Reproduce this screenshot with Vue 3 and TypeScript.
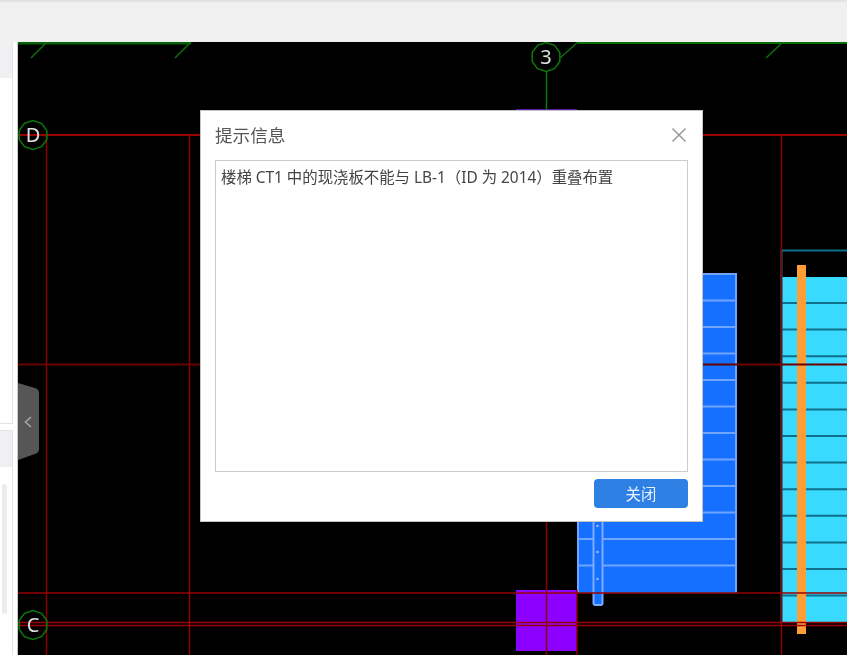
<script setup lang="ts">
const blueLines = [300.5, 327, 353.5, 380, 406.5, 433, 459.5, 486, 512.5, 539, 565.5]
const cyanLines = [303, 329.6, 356.2, 382.8, 409.4, 436, 462.6, 489.2, 515.8, 542.4, 569, 595.6]
const railDots = [526, 552, 579]
const gridV = [46.5, 189.5, 546.5, 781.5]
const gridH = [
  { y: 135, w: 2, c: '#9a0000' },
  { y: 364.5, w: 2, c: '#6a0000' },
  { y: 593, w: 1.5, c: '#9a0000' },
  { y: 622.5, w: 1.5, c: '#9a0000' },
  { y: 625.5, w: 1.5, c: '#9a0000' },
]
const ticks = [
  [31, 58, 47, 42],
  [175, 58, 191, 42],
  [560, 58, 578, 42],
  [766, 58, 783, 42],
]
const axes = [
  { label: 'D', x: 33, y: 135 },
  { label: '3', x: 546, y: 57 },
  { label: 'C', x: 33, y: 625 },
]

function ring(cx: number, cy: number) {
  const pts: string[] = []
  for (let i = 0; i < 10; i++) {
    const a = (Math.PI * 2 * i) / 10 + Math.PI / 10
    pts.push(`${(cx + 14.5 * Math.cos(a)).toFixed(1)},${(cy + 14.5 * Math.sin(a)).toFixed(1)}`)
  }
  return pts.join(' ')
}
</script>

<template>
  <div class="page">
    <div class="topbar"></div>
    <div class="main">
      <aside class="sidebar">
        <section class="panel panel-top">
          <div class="panel-head"></div>
        </section>
        <section class="panel panel-bottom">
          <div class="panel-head"></div>
          <div class="scroll"></div>
        </section>
      </aside>

      <div class="canvas">
        <svg class="drawing" viewBox="18 42 829 613" width="829" height="613">
          <!-- cyan stair -->
          <rect x="782" y="277" width="65" height="345" fill="#38dbff" />
          <line v-for="y in cyanLines" :key="y" x1="782" x2="847" :y1="y" :y2="y" stroke="#0e6f8c" stroke-width="2" />
          <path d="M781.5 622V250.5H847" fill="none" stroke="#0e6f8c" stroke-width="2" />

          <!-- blue stair -->
          <rect x="577" y="273" width="160" height="320" fill="#1570ff" />
          <line v-for="y in blueLines" :key="y" x1="577" x2="737" :y1="y" :y2="y" stroke="#6fa4ff" stroke-width="2" />
          <path d="M578 592V274H736V592" fill="none" stroke="#6fa4ff" stroke-width="2" />
          <rect x="593.5" y="480" width="9" height="125" rx="2" fill="#1570ff" stroke="#7cabff" stroke-width="2" />
          <circle v-for="y in railDots" :key="y" cx="597.5" :cy="y" r="1.3" fill="#8fb8ff" />

          <rect x="516" y="590" width="61" height="61" fill="#8c00ff" />
          <line x1="516" x2="577" y1="109.5" y2="109.5" stroke="#5b16a8" />
          <rect x="797" y="265" width="9" height="369" fill="#ff9d36" />

          <!-- grid -->
          <line v-for="x in gridV" :key="x" :x1="x" :x2="x" y1="135" y2="655" stroke="#8c0000" stroke-width="1.5" />
          <line x1="577" x2="577" y1="590" y2="655" stroke="#8c0000" stroke-width="1.5" />
          <line
            v-for="h in gridH"
            :key="h.y"
            x1="18"
            x2="847"
            :y1="h.y"
            :y2="h.y"
            :stroke="h.c"
            :stroke-width="h.w"
          />

          <!-- axes -->
          <line x1="18" x2="191" y1="43" y2="43" stroke="#0a5f0a" stroke-width="3" />
          <line x1="578" x2="847" y1="43" y2="43" stroke="#0a6f0a" stroke-width="2" />
          <line
            v-for="(t, i) in ticks"
            :key="i"
            :x1="t[0]"
            :y1="t[1]"
            :x2="t[2]"
            :y2="t[3]"
            stroke="#0b6f0b"
            stroke-width="1.5"
          />
          <line x1="546.5" x2="546.5" y1="71" y2="110" stroke="#0b7a0b" stroke-width="1.5" />
          <g v-for="a in axes" :key="a.label">
            <polygon :points="ring(a.x, a.y)" fill="none" stroke="#0b7a0b" stroke-width="1.5" />
            <text :x="a.x" :y="a.y + 7" class="axis-label" text-anchor="middle">{{ a.label }}</text>
          </g>
        </svg>

        <div class="toggle">
          <svg width="21" height="78" viewBox="0 0 21 78">
            <path d="M0 0L17 5Q21 6 21 10V66Q21 70 17 71L0 77Z" fill="#565656" />
            <path d="M13 34L7.5 39L13 44" fill="none" stroke="#a5a5a5" stroke-width="1.6" />
          </svg>
        </div>

        <div class="dialog">
          <header class="dialog-head">
            <span class="dialog-title">提示信息</span>
            <svg class="dialog-close" width="16" height="16" viewBox="0 0 16 16">
              <path d="M1.5 1.5L14.5 14.5M14.5 1.5L1.5 14.5" stroke="#999" stroke-width="1.5" fill="none" />
            </svg>
          </header>
          <div class="dialog-body">楼梯 CT1 中的现浇板不能与 LB-1（ID 为 2014）重叠布置</div>
          <footer class="dialog-foot">
            <button class="dialog-btn" type="button">关闭</button>
          </footer>
        </div>
      </div>
    </div>
  </div>
</template>

<style>
html,
body {
  margin: 0;
  background: #fff;
  overflow: hidden;
}
</style>

<style scoped>
.page {
  width: 847px;
  height: 655px;
  display: flex;
  flex-direction: column;
  font-family: "Noto Sans", "Noto Sans CJK SC", sans-serif;
  overflow: hidden;
  filter: blur(0.35px);
}

.topbar {
  height: 40px;
  flex: none;
  background: #f0f0f0;
  border-top: 2px solid #e2e2e2;
}

.main {
  flex: 1;
  display: flex;
  min-height: 0;
}

.sidebar {
  width: 18px;
  flex: none;
  box-sizing: border-box;
  display: flex;
  flex-direction: column;
  gap: 6px;
  background: #fff;
  border-right: 1px solid #c8c8c8;
}

.panel {
  width: 13px;
  box-sizing: border-box;
  background: #fff;
  border-right: 1px solid #e4e4e4;
}

.panel-top {
  height: 382px;
  border-bottom: 1px solid #e4e4e4;
}

.panel-bottom {
  flex: 1;
  border-top: 1px solid #e4e4e4;
  position: relative;
}

.panel-head {
  height: 36px;
  background: #f0f0f3;
}

.scroll {
  position: absolute;
  left: 2px;
  top: 53px;
  width: 5px;
  height: 130px;
  border-radius: 3px;
  background: #ececec;
}

.canvas {
  flex: 1;
  position: relative;
  background: #000;
  overflow: hidden;
}

.drawing {
  display: block;
}

.axis-label {
  font-family: "Noto Sans", sans-serif;
  font-size: 20px;
  fill: #e0e0e0;
}

.toggle {
  position: absolute;
  left: 0;
  top: 341px;
  line-height: 0;
}

.dialog {
  position: absolute;
  left: 183px;
  top: 69px;
  width: 501px;
  height: 410px;
  box-sizing: border-box;
  display: flex;
  flex-direction: column;
  padding: 0 14px 14px 14px;
  background: #fff;
  box-shadow: 0 0 0 1px #c4c4c4;
}

.dialog-head {
  height: 49px;
  flex: none;
  display: flex;
  align-items: center;
  justify-content: space-between;
}

.dialog-title {
  font-size: 17.6px;
  line-height: 50px;
  margin-top: -2px;
  color: #555;
}

.dialog-close {
  margin-top: -2px;
  margin-right: 1px;
}

.dialog-body {
  height: 312px;
  flex: none;
  box-sizing: border-box;
  padding: 7px 5px 5px;
  border: 1px solid #ccc;
  font-size: 15.4px;
  line-height: 20px;
  color: #444;
}

.dialog-foot {
  margin-top: 7px;
  display: flex;
  justify-content: flex-end;
}

.dialog-btn {
  width: 94px;
  height: 29px;
  padding: 0;
  border: none;
  border-radius: 4px;
  background: #2f80e4;
  color: #e8f1fd;
  font-family: inherit;
  font-size: 15.4px;
}
</style>
